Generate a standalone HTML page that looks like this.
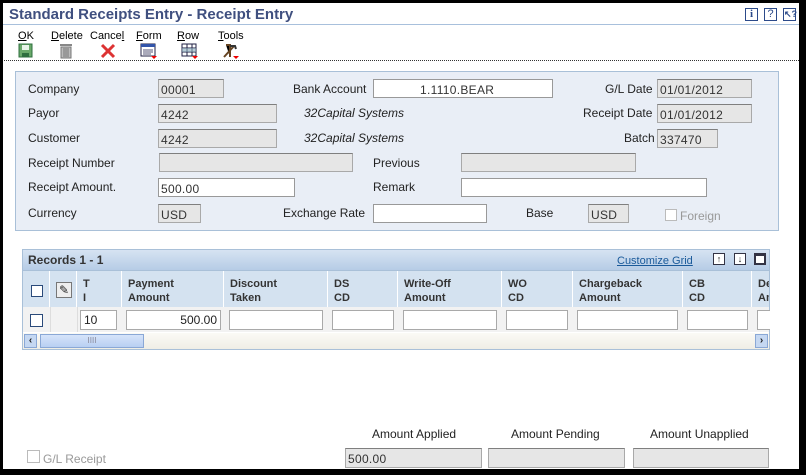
<!DOCTYPE html>
<html><head><meta charset="utf-8"><style>
*{margin:0;padding:0;box-sizing:border-box}
body{width:806px;height:475px;overflow:hidden;background:#000;font-family:"Liberation Sans",Arial,sans-serif;font-size:12px;color:#222;position:relative}
#w{position:absolute;left:3px;top:3px;width:796px;height:466px;background:#fff}
.a{position:absolute}
.l{position:absolute;font-size:12px;color:#222;white-space:nowrap}
.i{position:absolute;height:19px;border:1px solid #a9a9a9;border-top-color:#7f7f7f;background:#e6e6e6;font-size:12px;padding:3px 2px 0;color:#333;letter-spacing:.3px}
.wh{background:#fff;border-color:#999}
.tb{position:absolute;top:30px;font-size:11px;color:#000}
.hd{position:absolute;top:271px;height:36px;border-right:1px solid #fff;background:#d4e2f0;font-weight:bold;font-size:11px;color:#333;padding:6px 0 0 6px;line-height:14px}
.ci{position:absolute;top:310px;height:20px;border:1px solid #a9a9a9;background:#fff;font-size:12px;padding:2px 3px}
</style></head><body>
<div id="w"></div>
<div class="a" style="left:9px;top:6px;font-size:15px;font-weight:bold;color:#3f4f7f">Standard Receipts Entry - Receipt Entry</div>
<div class="a" style="left:3px;top:24px;width:796px;height:1px;background:#a8c0dc"></div>
<div class="a" style="left:745px;top:8px;width:13px;height:13px;border:1px solid #2c4a8a;font-size:11px;text-align:center;line-height:11px;color:#2c4a8a;font-family:'Liberation Serif',serif;font-weight:bold">i</div>
<div class="a" style="left:764px;top:8px;width:13px;height:13px;border:1px solid #2c4a8a;font-size:11px;text-align:center;line-height:11px;color:#2c4a8a">?</div>
<div class="a" style="left:783px;top:8px;width:13px;height:13px;border:1px solid #2c4a8a;font-size:9px;text-align:center;line-height:11px;color:#2c4a8a;font-weight:bold">↖?</div>
<div class="tb" style="left:18px"><u>O</u>K</div>
<div class="tb" style="left:51px"><u>D</u>elete</div>
<div class="tb" style="left:90px">Cance<u>l</u></div>
<div class="tb" style="left:136px"><u>F</u>orm</div>
<div class="tb" style="left:177px"><u>R</u>ow</div>
<div class="tb" style="left:218px"><u>T</u>ools</div>
<svg class="a" style="left:18px;top:43px" width="16" height="16"><rect x="1" y="1" width="13" height="13" fill="#6aa96a" stroke="#2f6f3f"/><rect x="4" y="2" width="7" height="5" fill="#e8f4e8"/><rect x="4" y="10" width="7" height="4" fill="#2f6f3f"/></svg>
<svg class="a" style="left:59px;top:43px" width="14" height="16"><rect x="1" y="1" width="12" height="2" fill="#888"/><rect x="2" y="4" width="10" height="11" fill="#bbb" stroke="#777"/><path d="M5 5v9M7 5v9M9 5v9" stroke="#777"/></svg>
<svg class="a" style="left:100px;top:43px" width="16" height="16"><path d="M2 2L14 14M14 2L2 14" stroke="#d33" stroke-width="3"/></svg>
<svg class="a" style="left:140px;top:43px" width="18" height="16"><rect x="1" y="1" width="14" height="12" fill="#fff" stroke="#224"/><rect x="1" y="1" width="14" height="3" fill="#35a"/><path d="M3 7h10M3 9h10M3 11h8" stroke="#557"/><path d="M11 13h6l-3 3z" fill="#e00"/></svg>
<svg class="a" style="left:181px;top:43px" width="18" height="16"><rect x="1" y="1" width="14" height="12" fill="#fff" stroke="#224"/><path d="M1 5h14M1 9h14M6 1v12M11 1v12" stroke="#224"/><rect x="1" y="5" width="14" height="4" fill="#8ab" opacity=".6"/><path d="M11 13h6l-3 3z" fill="#e00"/></svg>
<svg class="a" style="left:222px;top:43px" width="18" height="16"><path d="M2 14L12 3M4 2h4v12" stroke="#642" stroke-width="2"/><path d="M8 3l5 0 1 3" stroke="#333" stroke-width="2" fill="none"/><path d="M11 13h6l-3 3z" fill="#e00"/></svg>
<div class="a" style="left:4px;top:60px;width:795px;border-top:1px dotted #333"></div>
<div class="a" style="left:15px;top:71px;width:764px;height:160px;background:#e9eef6;border:1px solid #a9c0d8"></div>
<div class="l" style="left:28px;top:82px">Company</div>
<div class="i" style="left:158px;top:79px;width:66px">00001</div>
<div class="l" style="left:293px;top:82px">Bank Account</div>
<div class="i wh" style="left:373px;top:79px;width:180px;padding-left:46px">1.1110.BEAR</div>
<div class="l" style="left:605px;top:82px">G/L Date</div>
<div class="i" style="left:657px;top:79px;width:95px">01/01/2012</div>
<div class="l" style="left:28px;top:106px">Payor</div>
<div class="i" style="left:158px;top:104px;width:119px">4242</div>
<div class="l" style="left:304px;top:106px;font-style:italic">32Capital Systems</div>
<div class="l" style="left:583px;top:106px">Receipt Date</div>
<div class="i" style="left:657px;top:104px;width:95px">01/01/2012</div>
<div class="l" style="left:28px;top:131px">Customer</div>
<div class="i" style="left:158px;top:129px;width:119px">4242</div>
<div class="l" style="left:304px;top:131px;font-style:italic">32Capital Systems</div>
<div class="l" style="left:624px;top:131px">Batch</div>
<div class="i" style="left:657px;top:129px;width:61px">337470</div>
<div class="l" style="left:28px;top:156px">Receipt Number</div>
<div class="i" style="left:159px;top:153px;width:194px"></div>
<div class="l" style="left:373px;top:156px">Previous</div>
<div class="i" style="left:461px;top:153px;width:175px"></div>
<div class="l" style="left:28px;top:180px">Receipt Amount.</div>
<div class="i wh" style="left:158px;top:178px;width:137px">500.00</div>
<div class="l" style="left:373px;top:180px">Remark</div>
<div class="i wh" style="left:461px;top:178px;width:246px"></div>
<div class="l" style="left:28px;top:206px">Currency</div>
<div class="i" style="left:158px;top:204px;width:43px">USD</div>
<div class="l" style="left:283px;top:206px">Exchange Rate</div>
<div class="i wh" style="left:373px;top:204px;width:114px"></div>
<div class="l" style="left:526px;top:206px">Base</div>
<div class="i" style="left:588px;top:204px;width:41px">USD</div>
<div class="a" style="left:665px;top:209px;width:12px;height:12px;border:1px solid #bbb;background:#fff"></div>
<div class="l" style="left:680px;top:209px;color:#999">Foreign</div>

<div class="a" style="left:22px;top:249px;width:748px;height:101px;border:1px solid #a9c0d8;background:#fff"></div>
<div class="a" style="left:22px;top:249px;width:748px;height:22px;background:linear-gradient(#d6e3f2,#b6cce6);border:1px solid #a9c0d8"></div>
<div class="a" style="left:28px;top:253px;font-weight:bold;font-size:12px;color:#333">Records 1 - 1</div>
<div class="a" style="left:617px;top:255px;font-size:11px;color:#1a5a9a;text-decoration:underline">Customize Grid</div>
<div class="a" style="left:713px;top:253px;width:12px;height:12px;border:1px solid #334;background:#fff;font-size:9px;text-align:center;line-height:10px;font-weight:bold">↑</div>
<div class="a" style="left:734px;top:253px;width:12px;height:12px;border:1px solid #334;background:#fff;font-size:9px;text-align:center;line-height:10px;font-weight:bold">↓</div>
<div class="a" style="left:754px;top:253px;width:12px;height:12px;border:2px solid #334;border-top-width:3px;background:#fff"></div>
<div class="hd" style="left:23px;width:27px"></div>
<div class="a" style="left:31px;top:285px;width:12px;height:12px;border:1px solid #2a4a7a;background:#fff"></div>
<div class="hd" style="left:50px;width:27px"></div>
<div class="a" style="left:56px;top:282px;width:16px;height:16px;border:1px solid #777;background:#eee;font-size:12px;text-align:center;line-height:14px">✎</div>
<div class="hd" style="left:77px;width:45px">T<br>I</div>
<div class="hd" style="left:122px;width:102px">Payment<br>Amount</div>
<div class="hd" style="left:224px;width:104px">Discount<br>Taken</div>
<div class="hd" style="left:328px;width:70px">DS<br>CD</div>
<div class="hd" style="left:398px;width:104px">Write-Off<br>Amount</div>
<div class="hd" style="left:502px;width:71px">WO<br>CD</div>
<div class="hd" style="left:573px;width:110px">Chargeback<br>Amount</div>
<div class="hd" style="left:683px;width:69px">CB<br>CD</div>
<div class="hd" style="left:752px;width:17px;overflow:hidden;border-right:0">De<br>Am</div>
<div class="a" style="left:23px;top:307px;width:746px;height:25px;background:#f2f2f2"></div>
<div class="a" style="left:50px;top:307px;width:1px;height:25px;background:#ddd"></div>
<div class="a" style="left:77px;top:307px;width:1px;height:25px;background:#ddd"></div>
<div class="a" style="left:30px;top:314px;width:13px;height:13px;border:1px solid #2a4a7a;background:#fff"></div>
<div class="ci" style="left:80px;width:37px">10</div>
<div class="ci" style="left:126px;width:95px;text-align:right">500.00</div>
<div class="ci" style="left:229px;width:94px"></div>
<div class="ci" style="left:332px;width:62px"></div>
<div class="ci" style="left:403px;width:94px"></div>
<div class="ci" style="left:506px;width:62px"></div>
<div class="ci" style="left:577px;width:101px"></div>
<div class="ci" style="left:687px;width:61px"></div>
<div class="ci" style="left:757px;width:13px;border-right:0"></div>
<div class="a" style="left:23px;top:333px;width:746px;height:16px;background:linear-gradient(#fbfaf6,#efeee6)"></div>
<div class="a" style="left:24px;top:334px;width:13px;height:14px;background:#c5d8f2;border:1px solid #8aa8d6;font-size:10px;line-height:12px;text-align:center;font-weight:bold">‹</div>
<div class="a" style="left:40px;top:334px;width:104px;height:14px;background:linear-gradient(#d6e4fa,#b8cff2);border:1px solid #8aa8d6;font-size:8px;color:#889;text-align:center;line-height:12px">IIII</div>
<div class="a" style="left:755px;top:334px;width:13px;height:14px;background:#c5d8f2;border:1px solid #8aa8d6;font-size:10px;line-height:12px;text-align:center;font-weight:bold">›</div>

<div class="l" style="left:372px;top:427px">Amount Applied</div>
<div class="l" style="left:511px;top:427px">Amount Pending</div>
<div class="l" style="left:650px;top:427px">Amount Unapplied</div>
<div class="i" style="left:345px;top:448px;width:137px;height:20px">500.00</div>
<div class="i" style="left:488px;top:448px;width:137px;height:20px"></div>
<div class="i" style="left:633px;top:448px;width:136px;height:20px"></div>
<div class="a" style="left:27px;top:450px;width:13px;height:13px;border:1px solid #bbb;background:#fff"></div>
<div class="l" style="left:43px;top:452px;color:#999">G/L Receipt</div>
</body></html>
